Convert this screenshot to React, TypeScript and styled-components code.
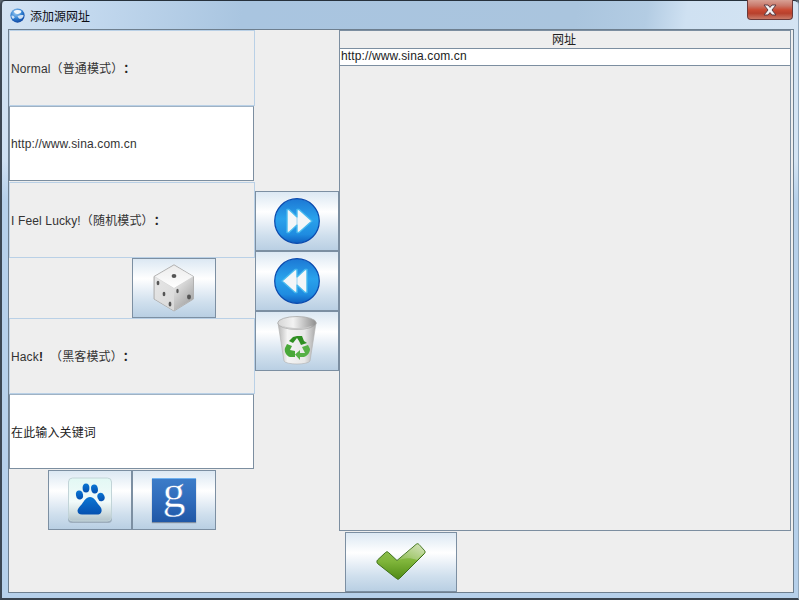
import React from "react";
import styled, { createGlobalStyle } from "styled-components";

const Global = createGlobalStyle`
  html, body { margin: 0; padding: 0; background: #5b6670; }
  body { width: 799px; height: 600px; overflow: hidden; font-family: "Liberation Sans", "Noto Sans CJK SC", sans-serif; text-spacing-trim: space-all; }
`;

const Window = styled.div`
  box-sizing: border-box;
  width: 799px;
  height: 600px;
  display: flex;
  flex-direction: column;
  border-top: 1px solid #26313c;
  border-left: 2px solid #3c4753;
  border-right: 1px solid #93a9bd;
  border-bottom: 2px solid #39434e;
  border-radius: 5px 5px 0 0;
  background:
    linear-gradient(180deg, rgba(255,255,255,0) 0, rgba(255,255,255,0) 160px, #b6d0ea 200px),
    linear-gradient(98deg, #d3e3f3 0, #c2d8ee 90px, #a9c5e0 240px, #aac5de 570px, #b3cce3 640px, #cfe1f2 680px, #d4e4f3 799px);
  background-color: #b6d0ea;
`;

const TitleBar = styled.div`
  height: 28px;
  flex: none;
  display: flex;
  align-items: center;
  padding-left: 8px;
  padding-top: 1px;
  box-sizing: border-box;
  gap: 5px;
  position: relative;
`;

const TitleText = styled.span`
  font-size: 12px;
  color: #0c0c14;
`;

const CloseButton = styled.div`
  position: absolute;
  top: -1px;
  right: 5px;
  width: 46px;
  height: 20px;
  box-sizing: border-box;
  border: 1px solid #6b3a3a;
  border-top: none;
  border-radius: 0 0 4px 4px;
  background: linear-gradient(180deg, #d8a195 0, #c9786a 30%, #c94a33 52%, #b8402c 70%, #c97a68 100%);
  display: flex;
  align-items: center;
  justify-content: center;
`;

const Body = styled.div`
  flex: 1;
  min-height: 0;
  margin: 0 4px 5px 6px;
  border: 1px solid #6e7f8f;
  background: #eeeeee;
  display: flex;
  flex-direction: column;
`;

const Main = styled.div`
  display: grid;
  grid-template-columns: 246px 84px 452px;
  height: 501px;
  flex: none;
`;

const LeftColumn = styled.div`
  display: flex;
  flex-direction: column;
`;

const LabelBox = styled.div`
  box-sizing: border-box;
  height: 76px;
  flex: none;
  width: 246px;
  border: 1px solid #b9d0e6;
  border-left-color: #c4d6e8;
  display: flex;
  align-items: center;
  font-size: 12px;
  letter-spacing: 0.14px;
  color: #333;
  padding: 0 0 2px 1px;
`;

const LabelText = styled.span`
  white-space: pre;
`;

const Strong = styled.span`
  font-weight: 700;
  color: #222;
`;

const InputBox = styled.div<{ $dark?: boolean; $gap?: number }>`
  box-sizing: border-box;
  height: 75px;
  width: 245px;
  flex: none;
  margin-bottom: ${(p) => p.$gap ?? 0}px;
  background: #fff;
  border: 1px solid #7c8ea0;
  border-top-color: #9fb2c4;
  display: flex;
  align-items: center;
  font-size: 12px;
  letter-spacing: 0.14px;
  color: ${(p) => (p.$dark ? "#222" : "#333")};
  padding-left: 1px;
`;

const ButtonRow = styled.div<{ $pad: number }>`
  display: flex;
  height: 60px;
  flex: none;
  padding-left: ${(p) => p.$pad}px;
`;

const IconButton = styled.div<{ $w?: number }>`
  box-sizing: border-box;
  width: ${(p) => p.$w ?? 84}px;
  height: 60px;
  flex: none;
  border: 1px solid #7c8fa2;
  background: linear-gradient(180deg, #dce8f3 0%, #eef4f9 18%, #ffffff 34%, #e6eef6 55%, #cfdfed 75%, #b9cfe3 100%);
  display: flex;
  align-items: center;
  justify-content: center;
`;

const MiddleColumn = styled.div`
  display: flex;
  flex-direction: column;
  justify-content: center;
`;

const Table = styled.div`
  box-sizing: border-box;
  width: 452px;
  border: 1px solid #7c8ea0;
  display: flex;
  flex-direction: column;
`;

const TableHeader = styled.div`
  height: 17px;
  flex: none;
  border-bottom: 1px solid #7c8ea0;
  text-align: center;
  font-size: 12px;
  line-height: 19px;
  color: #222;
  padding-right: 2px;
`;

const TableRow = styled.div`
  height: 16px;
  flex: none;
  background: #fff;
  border-bottom: 1px solid #7c8ea0;
  font-size: 12px;
  letter-spacing: 0.14px;
  line-height: 15px;
  color: #222;
  padding-left: 1px;
`;

const Footer = styled.div`
  flex: 1;
  display: flex;
  padding: 1px 0 0 336px;
`;

const GoogleTile = styled.div`
  box-sizing: border-box;
  width: 44px;
  height: 44px;
  border-top: 1px solid #6fb0ee;
  background: linear-gradient(180deg, #3c7cc8 0%, #2f6bbb 50%, #1f57a6 100%);
  box-shadow: 0 1px 1px rgba(60, 70, 90, 0.5);
  color: #fff;
  font-family: "Liberation Serif", serif;
  font-size: 46px;
  line-height: 25px;
  text-align: center;
  -webkit-text-stroke: 0.5px #2f6bbb;
`;

const Globe = () => (
  <svg width="15" height="15" viewBox="0 0 16 16">
    <defs>
      <radialGradient id="gl" cx="40%" cy="30%" r="75%">
        <stop offset="0" stopColor="#a8d4f5" />
        <stop offset="0.55" stopColor="#2f7fd0" />
        <stop offset="1" stopColor="#0b3f9c" />
      </radialGradient>
    </defs>
    <circle cx="8" cy="8" r="7.6" fill="url(#gl)" />
    <path d="M4 3.5C6 1.8 10 1.6 12 3C12.6 5 10.5 6 8.5 6.4C6.5 6.8 5 5.5 4 3.5Z" fill="#f2f7fb" />
    <path d="M8 8.5C10 8 12.5 7 14.5 7.6C14.5 10 12 12 10 11.5C9 11 8.5 9.5 8 8.5Z" fill="#cfe2f5" />
    <path d="M1.5 8C3 7.5 4.5 8.5 5 10C4.5 11 3.5 11.5 3 11.5C2 10.8 1.5 9.5 1.5 8Z" fill="#cfe2f5" />
  </svg>
);

const CloseX = () => (
  <svg width="16" height="12" viewBox="0 0 16 12">
    <path
      d="M2 1H6L8 3.4L10 1H14L10 6L14 11H10L8 8.6L6 11H2L6 6Z"
      fill="#f3f4f6"
      stroke="#5a3b42"
      strokeWidth="1"
    />
  </svg>
);

const RoundArrows = ({ back, id }: { back?: boolean; id: string }) => (
  <svg width="46" height="46" viewBox="0 0 46 46">
    <defs>
      <linearGradient id={id} x1="0" y1="0" x2="0" y2="1">
        <stop offset="0" stopColor="#1c78d4" />
        <stop offset="0.45" stopColor="#2aa2ec" />
        <stop offset="0.8" stopColor="#1f8ce0" />
        <stop offset="1" stopColor="#0f5fc0" />
      </linearGradient>
    </defs>
    <circle cx="23" cy="23" r="22.3" fill={`url(#${id})`} stroke="#0a49ad" strokeWidth="1.2" />
    <g transform={back ? "matrix(-1 0 0 1 46 0)" : undefined}>
      <path
        d="M13 11.5H15L23 19V11.5H25L38 23L25 34.5H23V27L15 34.5H13Z"
        fill="#f3f6f8"
        stroke="#45b8ee"
        strokeWidth="1.4"
        strokeLinejoin="round"
      />
      <path d="M23 19V27" stroke="#9ad4f2" strokeWidth="1" />
    </g>
  </svg>
);

const Trash = () => (
  <svg width="40" height="50" viewBox="0 0 40 50">
    <defs>
      <linearGradient id="tb" x1="0" y1="0" x2="1" y2="0">
        <stop offset="0" stopColor="#b5b5b5" />
        <stop offset="0.25" stopColor="#f4f4f4" />
        <stop offset="0.7" stopColor="#e8e8e8" />
        <stop offset="1" stopColor="#a8a8a8" />
      </linearGradient>
      <linearGradient id="ti" x1="0" y1="0" x2="1" y2="0">
        <stop offset="0" stopColor="#d6d6d6" />
        <stop offset="0.4" stopColor="#f2f2f2" />
        <stop offset="1" stopColor="#8e8e8e" />
      </linearGradient>
    </defs>
    <path d="M1 7L7 45C9 49 31 49 33 45L39 7Z" fill="url(#tb)" stroke="#b0b0b0" strokeWidth="0.6" />
    <ellipse cx="20" cy="7" rx="19.3" ry="6.5" fill="url(#ti)" stroke="#a8a8a8" strokeWidth="0.8" />
    <path d="M4 9C9 13 31 13 36 9C31 15 9 15 4 9Z" fill="#c9c9c9" />
    <g fill="#2f8f22">
      <path d="M16 21L20 20H25L27 25L30 27L24 29L22 25L20 22L16 27L12 25Z" />
      <path d="M10 28L15 30L13 34L18 35V41H13C9 40 7 35 8 32Z" fill="#48a838" />
      <path d="M31 29L33 33C33 37 30 40 27 41H23V44L18 38.5L23 34V37H28L25 31Z" fill="#56b046" />
    </g>
  </svg>
);

const Dice = () => (
  <svg width="42" height="48" viewBox="0 0 42 48">
    <defs>
      <linearGradient id="dr" x1="0" y1="0" x2="0.6" y2="1">
        <stop offset="0" stopColor="#f4f4f4" />
        <stop offset="1" stopColor="#a4a4a4" />
      </linearGradient>
      <linearGradient id="dl" x1="0" y1="0" x2="0.8" y2="1">
        <stop offset="0" stopColor="#e6e6e6" />
        <stop offset="1" stopColor="#dadada" />
      </linearGradient>
      <linearGradient id="dt" x1="0" y1="0" x2="0" y2="1">
        <stop offset="0" stopColor="#ececec" />
        <stop offset="1" stopColor="#ffffff" />
      </linearGradient>
    </defs>
    <path d="M21 0.8L40.5 12.5V35L21 47L1 35V12.5Z" fill="#d4d4d4" stroke="#b2b2b2" strokeWidth="1" />
    <path d="M21 1.5L40 12.5L21 24L2 12.5Z" fill="url(#dt)" />
    <path d="M2 13L21 24.5V46.5L2 35Z" fill="url(#dl)" />
    <path d="M40 13L21 24.5V46.5L40 35Z" fill="url(#dr)" />
    <g fill="#555">
      <ellipse cx="21" cy="12" rx="2.4" ry="2" />
      <ellipse cx="5" cy="19" rx="1.4" ry="2.3" />
      <ellipse cx="11" cy="30" rx="1.4" ry="2.3" />
      <ellipse cx="17" cy="40" rx="1.4" ry="2.6" />
      <ellipse cx="24.5" cy="27" rx="1.2" ry="2.3" />
      <ellipse cx="36" cy="33" rx="2" ry="2.4" />
    </g>
  </svg>
);

const Paw = () => (
  <svg width="46" height="46" viewBox="0 0 46 46">
    <defs>
      <linearGradient id="pb" x1="0" y1="0" x2="0" y2="1">
        <stop offset="0" stopColor="#e2f8f4" />
        <stop offset="0.55" stopColor="#f2fbfa" />
        <stop offset="0.8" stopColor="#d2dfe2" />
        <stop offset="1" stopColor="#b3c3cb" />
      </linearGradient>
      <linearGradient id="pp" x1="0" y1="0" x2="0" y2="1">
        <stop offset="0" stopColor="#0a76d4" />
        <stop offset="1" stopColor="#0550b0" />
      </linearGradient>
    </defs>
    <rect x="1" y="3" width="44" height="43" rx="4" fill="#7e8d99" opacity="0.55" />
    <rect x="1.5" y="1" width="43" height="43" rx="4" fill="url(#pb)" stroke="#c2d4d8" />
    <g fill="url(#pp)">
      <ellipse cx="12.5" cy="18" rx="3.5" ry="4.5" transform="rotate(-12 12.5 18)" />
      <ellipse cx="19" cy="11" rx="3.4" ry="4.5" />
      <ellipse cx="27.5" cy="12" rx="3.4" ry="4.5" transform="rotate(-10 27.5 12)" />
      <ellipse cx="34" cy="20" rx="3.5" ry="4.3" transform="rotate(-20 34 20)" />
      <path d="M23 20C27 20 29 24 31 27C34 30 35 32 34.5 34.5C34 37 32 37.5 30 37.5H15C12 37.5 10.5 36 10.5 33.5C11 31 13 29.5 15 27C17 24 19 20 23 20Z" />
    </g>
  </svg>
);

const Check = () => (
  <svg width="50" height="38" viewBox="0 0 50 38">
    <defs>
      <linearGradient id="ck" x1="0" y1="0" x2="0" y2="1">
        <stop offset="0" stopColor="#98c45a" />
        <stop offset="0.5" stopColor="#7fb53a" />
        <stop offset="1" stopColor="#4f8a14" />
      </linearGradient>
      <linearGradient id="cg" x1="1" y1="0" x2="0" y2="1">
        <stop offset="0" stopColor="#e8eddc" stopOpacity="0.75" />
        <stop offset="1" stopColor="#e8eddc" stopOpacity="0.1" />
      </linearGradient>
    </defs>
    <path
      d="M1.5 17L9.5 9.5C10.5 8.5 11.5 8.5 12.5 9.5L21 17.5L40 1.5C41 0.5 42 0.5 43 1.5L48.5 7.5C49.3 8.5 49.3 9.5 48.5 10.5L23.5 35.5C22.5 36.5 21.5 36.5 20.5 35.5L1.5 20.5C0.7 19.5 0.7 18 1.5 17Z"
      fill="url(#ck)"
      stroke="#3d6f1a"
      strokeWidth="1"
    />
    <path
      d="M21 17.5L40 2C41 1 42 1 43 2L48 7.5C48.6 8.3 48.6 9.3 48 10L41 17C34 14 27 15 21 17.5Z"
      fill="url(#cg)"
    />
  </svg>
);

export default function App() {
  return (
    <>
      <Global />
      <Window>
        <TitleBar>
          <Globe />
          <TitleText>添加源网址</TitleText>
          <CloseButton>
            <CloseX />
          </CloseButton>
        </TitleBar>
        <Body>
          <Main>
            <LeftColumn>
              <LabelBox>
                <LabelText>
                  Normal（普通模式）<Strong>：</Strong>
                </LabelText>
              </LabelBox>
              <InputBox $gap={1}>http://www.sina.com.cn</InputBox>
              <LabelBox>
                <LabelText>
                  I Feel Lucky!（随机模式）<Strong>：</Strong>
                </LabelText>
              </LabelBox>
              <ButtonRow $pad={123}>
                <IconButton>
                  <Dice />
                </IconButton>
              </ButtonRow>
              <LabelBox>
                <LabelText>
                  Hack<Strong>!</Strong>{"  "}（黑客模式）<Strong>：</Strong>
                </LabelText>
              </LabelBox>
              <InputBox $dark $gap={1}>在此输入关键词</InputBox>
              <ButtonRow $pad={39}>
                <IconButton>
                  <Paw />
                </IconButton>
                <IconButton>
                  <GoogleTile>g</GoogleTile>
                </IconButton>
              </ButtonRow>
            </LeftColumn>
            <MiddleColumn>
              <IconButton>
                <RoundArrows id="fw" />
              </IconButton>
              <IconButton>
                <RoundArrows id="bk" back />
              </IconButton>
              <IconButton>
                <Trash />
              </IconButton>
            </MiddleColumn>
            <Table>
              <TableHeader>网址</TableHeader>
              <TableRow>http://www.sina.com.cn</TableRow>
            </Table>
          </Main>
          <Footer>
            <IconButton $w={112}>
              <Check />
            </IconButton>
          </Footer>
        </Body>
      </Window>
    </>
  );
}
